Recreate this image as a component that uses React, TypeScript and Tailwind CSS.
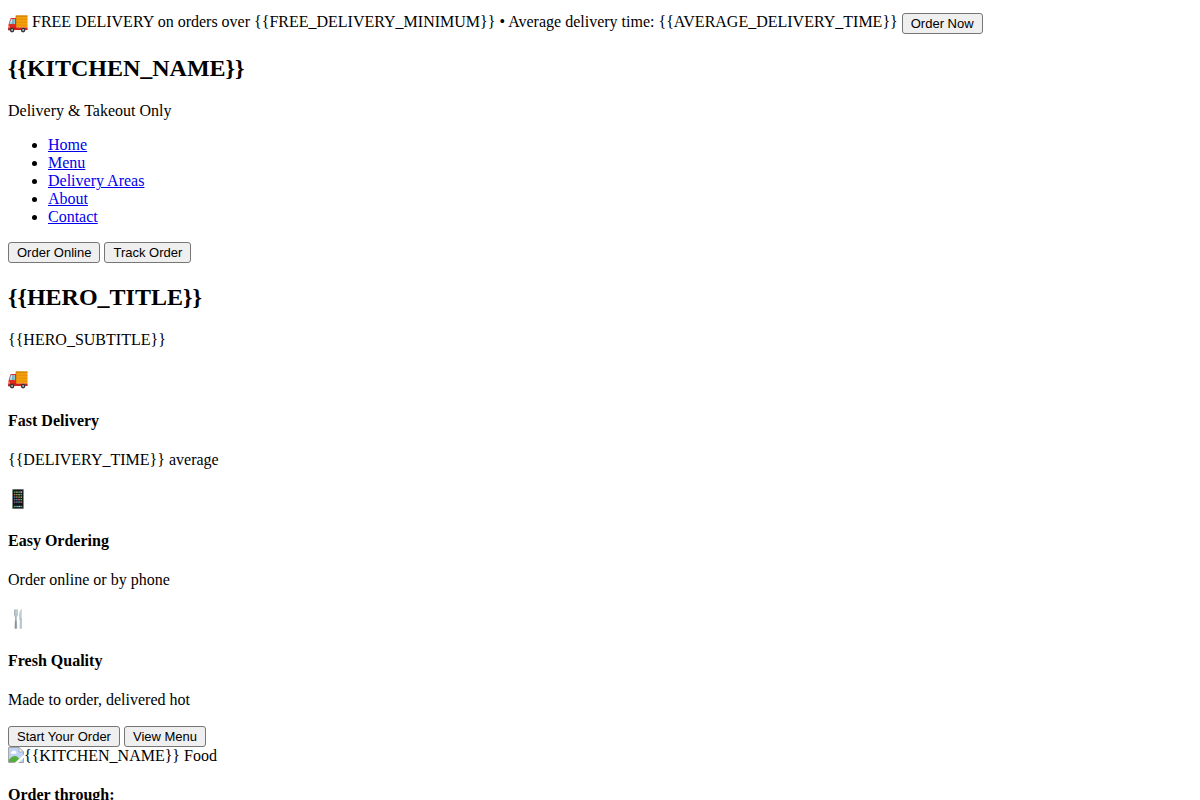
import type { ReactNode } from "react";

function Button({ children }: { children: ReactNode }) {
  return (
    <button
      type="button"
      className="h-[21px] rounded-[3px] border border-[#767676] bg-[#efefef] px-[7px] font-['Liberation_Sans',Arial,sans-serif] text-[13px] leading-[19px] whitespace-nowrap sm:px-2"
    >
      {children}
    </button>
  );
}

function Truck() {
  return (
    <svg viewBox="0 -2.5 20 20" className="h-5 w-5 shrink-0" role="img" aria-label="Delivery truck">
      <path d="M8 0h11.5v12H8z" fill="#f5a008" />
      <path d="M8 0h11.5v1.2H8z" fill="#c9800c" />
      <path d="M8.5 3.8h11M8.5 6.7h11M8.5 9.6h11" stroke="#dc8708" strokeWidth="0.7" />
      <path d="M8 0v12" stroke="#b96d10" strokeWidth="0.7" />
      <path d="M2.4 2.9Q2.7 2.5 3.4 2.5H8V14H.5V9.3z" fill="#e32b20" />
      <path d="M2.8 3.6H7v5H1.4z" fill="#8fc6d8" />
      <path d="M3.4 4.1h1.4L3.2 8H2.1z" fill="#d5edf2" />
      <path d="M4.9 3.6V9" stroke="#496c7a" strokeWidth="0.5" />
      <path d="M.4 11.2h7.8v.8H19.6v2.5H.4z" fill="#cf211b" />
      <path d="M0 13h3v1.8H0z" fill="#ad2520" />
      <path d="M.5 11h1.4v1H.5z" fill="#ffe28a" />
      <circle cx="4.1" cy="14.6" r="2.3" fill="#34383b" />
      <circle cx="4.1" cy="14.6" r="1" fill="#aeb5b8" />
      <circle cx="15.1" cy="14.6" r="2.3" fill="#34383b" />
      <circle cx="15.1" cy="14.6" r="1" fill="#aeb5b8" />
    </svg>
  );
}

function Phone() {
  const colors = ["#54ad57", "#d6d6d6", "#448ad2", "#c7a43f", "#8b5aac", "#dd624e", "#40a6aa", "#697580"];
  const cells = Array.from({ length: 20 }, (_, i) => i);
  return (
    <svg viewBox="0 0 20 20" className="h-5 w-5" role="img" aria-label="Mobile phone">
      <rect x="4" y="0" width="12" height="20" rx="1" fill="#858989" />
      <rect x="5" y="0.8" width="10" height="18.4" rx="0.6" fill="#101416" />
      {cells.map((i) => (
        <rect
          key={i}
          x={5.9 + (i % 4) * 2.2}
          y={2.4 + Math.floor(i / 4) * 2.5}
          width="1.6"
          height="1.4"
          fill={colors[(i * 3 + Math.floor(i / 4)) % 8]}
        />
      ))}
      <path d="M5.8 17.5h2" stroke="#55b554" strokeWidth="1.3" />
      <path d="M8.1 17.5h2" stroke="#5799ca" strokeWidth="1.3" />
      <path d="M10.3 17.5h2" stroke="#9ed1dd" strokeWidth="1.3" />
      <path d="M12.5 17.5h1.8" stroke="#79a65b" strokeWidth="1.3" />
    </svg>
  );
}

function Cutlery() {
  return (
    <svg viewBox="0 0 20 20" className="h-5 w-5" role="img" aria-label="Fork and knife">
      <path d="M6 .5v5.2q0 1.5 1.1 2L6.5 19q.1 1 1.3 1t1.4-1L8.6 7.7q1.1-.5 1.1-2V.5z" fill="#a7b0b6" />
      <path d="M7.2 1v4.6M8.5 1v4.6" stroke="#e5ebed" strokeWidth="0.5" />
      <path d="M6.6 6.5h2.5" stroke="#a9cfe2" strokeWidth="1.2" />
      <path d="M7.8 12v7" stroke="#788187" strokeWidth="0.9" />
      <path d="M14 0q-2.8 1.8-2.8 5.8v4.8h.7l-.4 8.5q.1.9 1.2.9t1.3-.9z" fill="#bdc8cd" />
      <path d="M13.4 1.4v8" stroke="#e4edf0" strokeWidth="0.7" />
      <path d="M11.4 10.2h2.4" stroke="#9bbfd0" strokeWidth="0.8" />
    </svg>
  );
}

function MissingImage() {
  return (
    <svg viewBox="0 0 16 16" className="h-4 w-4 shrink-0" aria-hidden="true">
      <path d="M.5.5H11L15.5 5v10.5H.5z" fill="#bfd3f5" stroke="#a5a5a5" />
      <path d="M3 6.8q-.6-2 1.3-2.2Q5 2.7 6.6 3.8 8.8 4 8.4 6.8z" fill="#fff" />
      <path d="M1 15v-2.5Q5 8 8.2 9.3q3.2 1.3 3.8 5.7z" fill="#55ad3c" />
      <path d="M11 .5V5h4.5z" fill="#f5f5f5" stroke="#a5a5a5" strokeWidth="0.8" />
      <path d="M16 7.5v3.2L10.2 16H6.6z" fill="#fff" />
    </svg>
  );
}

function Feature({ icon, title, text }: { icon: ReactNode; title: string; text: string }) {
  return (
    <div className="mt-4">
      <div className="flex h-[26px] items-center pt-0.5">{icon}</div>
      <h4 className="mt-[21px] font-bold">{title}</h4>
      <p className="mt-[21px]">{text}</p>
    </div>
  );
}

const links = ["Home", "Menu", "Delivery Areas", "About", "Contact"];

export default function App() {
  return (
    <div className="min-h-screen bg-white px-2 pt-[13px] font-['Liberation_Serif','Times_New_Roman',serif] text-[16px] leading-[18px] text-black">
      <div className="flex items-start gap-1">
        <Truck />
        <span>
          {"FREE DELIVERY on orders over {{FREE_DELIVERY_MINIMUM}} • Average delivery time: {{AVERAGE_DELIVERY_TIME}}"}
        </span>
        <Button>Order Now</Button>
      </div>

      <header>
        <h2 className="mt-[21px] text-[24px] leading-[27px] font-bold">{"{{KITCHEN_NAME}}"}</h2>
        <p className="mt-5">Delivery &amp; Takeout Only</p>
        <nav className="mt-4">
          <ul className="list-disc pl-10">
            {links.map((label) => (
              <li key={label}>
                <a href={`#${label.toLowerCase().replace(" ", "-")}`} className="text-[#0000ee] underline">
                  {label}
                </a>
              </li>
            ))}
          </ul>
        </nav>
        <div className="mt-4 flex gap-1">
          <Button>Order Online</Button>
          <Button>Track Order</Button>
        </div>
      </header>

      <main>
        <h2 className="mt-[21px] text-[24px] leading-[27px] font-bold">{"{{HERO_TITLE}}"}</h2>
        <p className="mt-5">{"{{HERO_SUBTITLE}}"}</p>
        <Feature icon={<Truck />} title="Fast Delivery" text={"{{DELIVERY_TIME}} average"} />
        <Feature icon={<Phone />} title="Easy Ordering" text="Order online or by phone" />
        <Feature icon={<Cutlery />} title="Fresh Quality" text="Made to order, delivered hot" />
        <div className="mt-[17px] flex gap-1">
          <Button>Start Your Order</Button>
          <Button>View Menu</Button>
        </div>
        <div className="flex items-start">
          <MissingImage />
          <span>{"{{KITCHEN_NAME}} Food"}</span>
        </div>
        <h4 className="mt-[21px] font-bold">Order through:</h4>
      </main>
    </div>
  );
}
